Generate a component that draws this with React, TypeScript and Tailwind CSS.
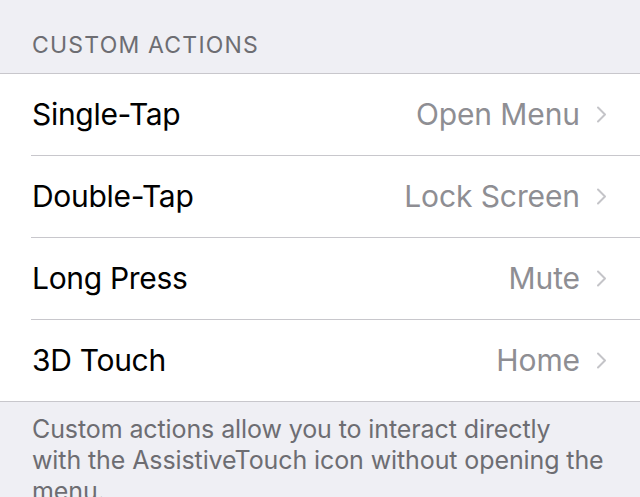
import React from "react";

const rows = [
  { label: "Single-Tap", value: "Open Menu" },
  { label: "Double-Tap", value: "Lock Screen" },
  { label: "Long Press", value: "Mute" },
  { label: "3D Touch", value: "Home" },
];

const Chevron: React.FC = () => (
  <svg width="11" height="17" viewBox="0 0 11 17" className="ml-[16px] shrink-0">
    <path d="M2 1.5 L9 8.5 L2 15.5" fill="none" stroke="#c4c4c8" strokeWidth="2" strokeLinecap="round" strokeLinejoin="round" />
  </svg>
);

const App: React.FC = () => {
  return (
    <div className="w-[640px] h-[497px] overflow-hidden bg-[#efeff4] font-['Inter',sans-serif]">
      {/* Section header */}
      <div className="h-[73px] flex items-end pl-[32px] pb-[16px] text-[23px] text-[#6d6d72] leading-none tracking-[1.2px]">
        CUSTOM ACTIONS
      </div>

      {/* Rows */}
      <div className="bg-white border-y border-[#c8c7cc]">
        {rows.map((row, i) => (
          <div key={row.label} className="pl-[31px]">
            <div
              className={
                i < rows.length - 1
                  ? "h-[82px] flex items-center pr-[33px] border-b border-[#c8c7cc]"
                  : "h-[81px] flex items-center pr-[33px]"
              }
            >
              <span className="pl-[1px] text-[30px] text-black tracking-[-0.3px]">{row.label}</span>
              <span className="ml-auto text-[30px] text-[#8e8e93] tracking-[-0.1px]">{row.value}</span>
              <Chevron />
            </div>
          </div>
        ))}
      </div>

      {/* Footer note */}
      <div className="pl-[32px] pt-[12px] text-[25px] leading-[31px] text-[#6d6d72] tracking-[-0.1px]">
        <span className="block whitespace-nowrap">Custom actions allow you to interact directly</span>
        <span className="block whitespace-nowrap">with the AssistiveTouch icon without opening the</span>
        <span className="block whitespace-nowrap">menu.</span>
      </div>
    </div>
  );
};

export default App;
